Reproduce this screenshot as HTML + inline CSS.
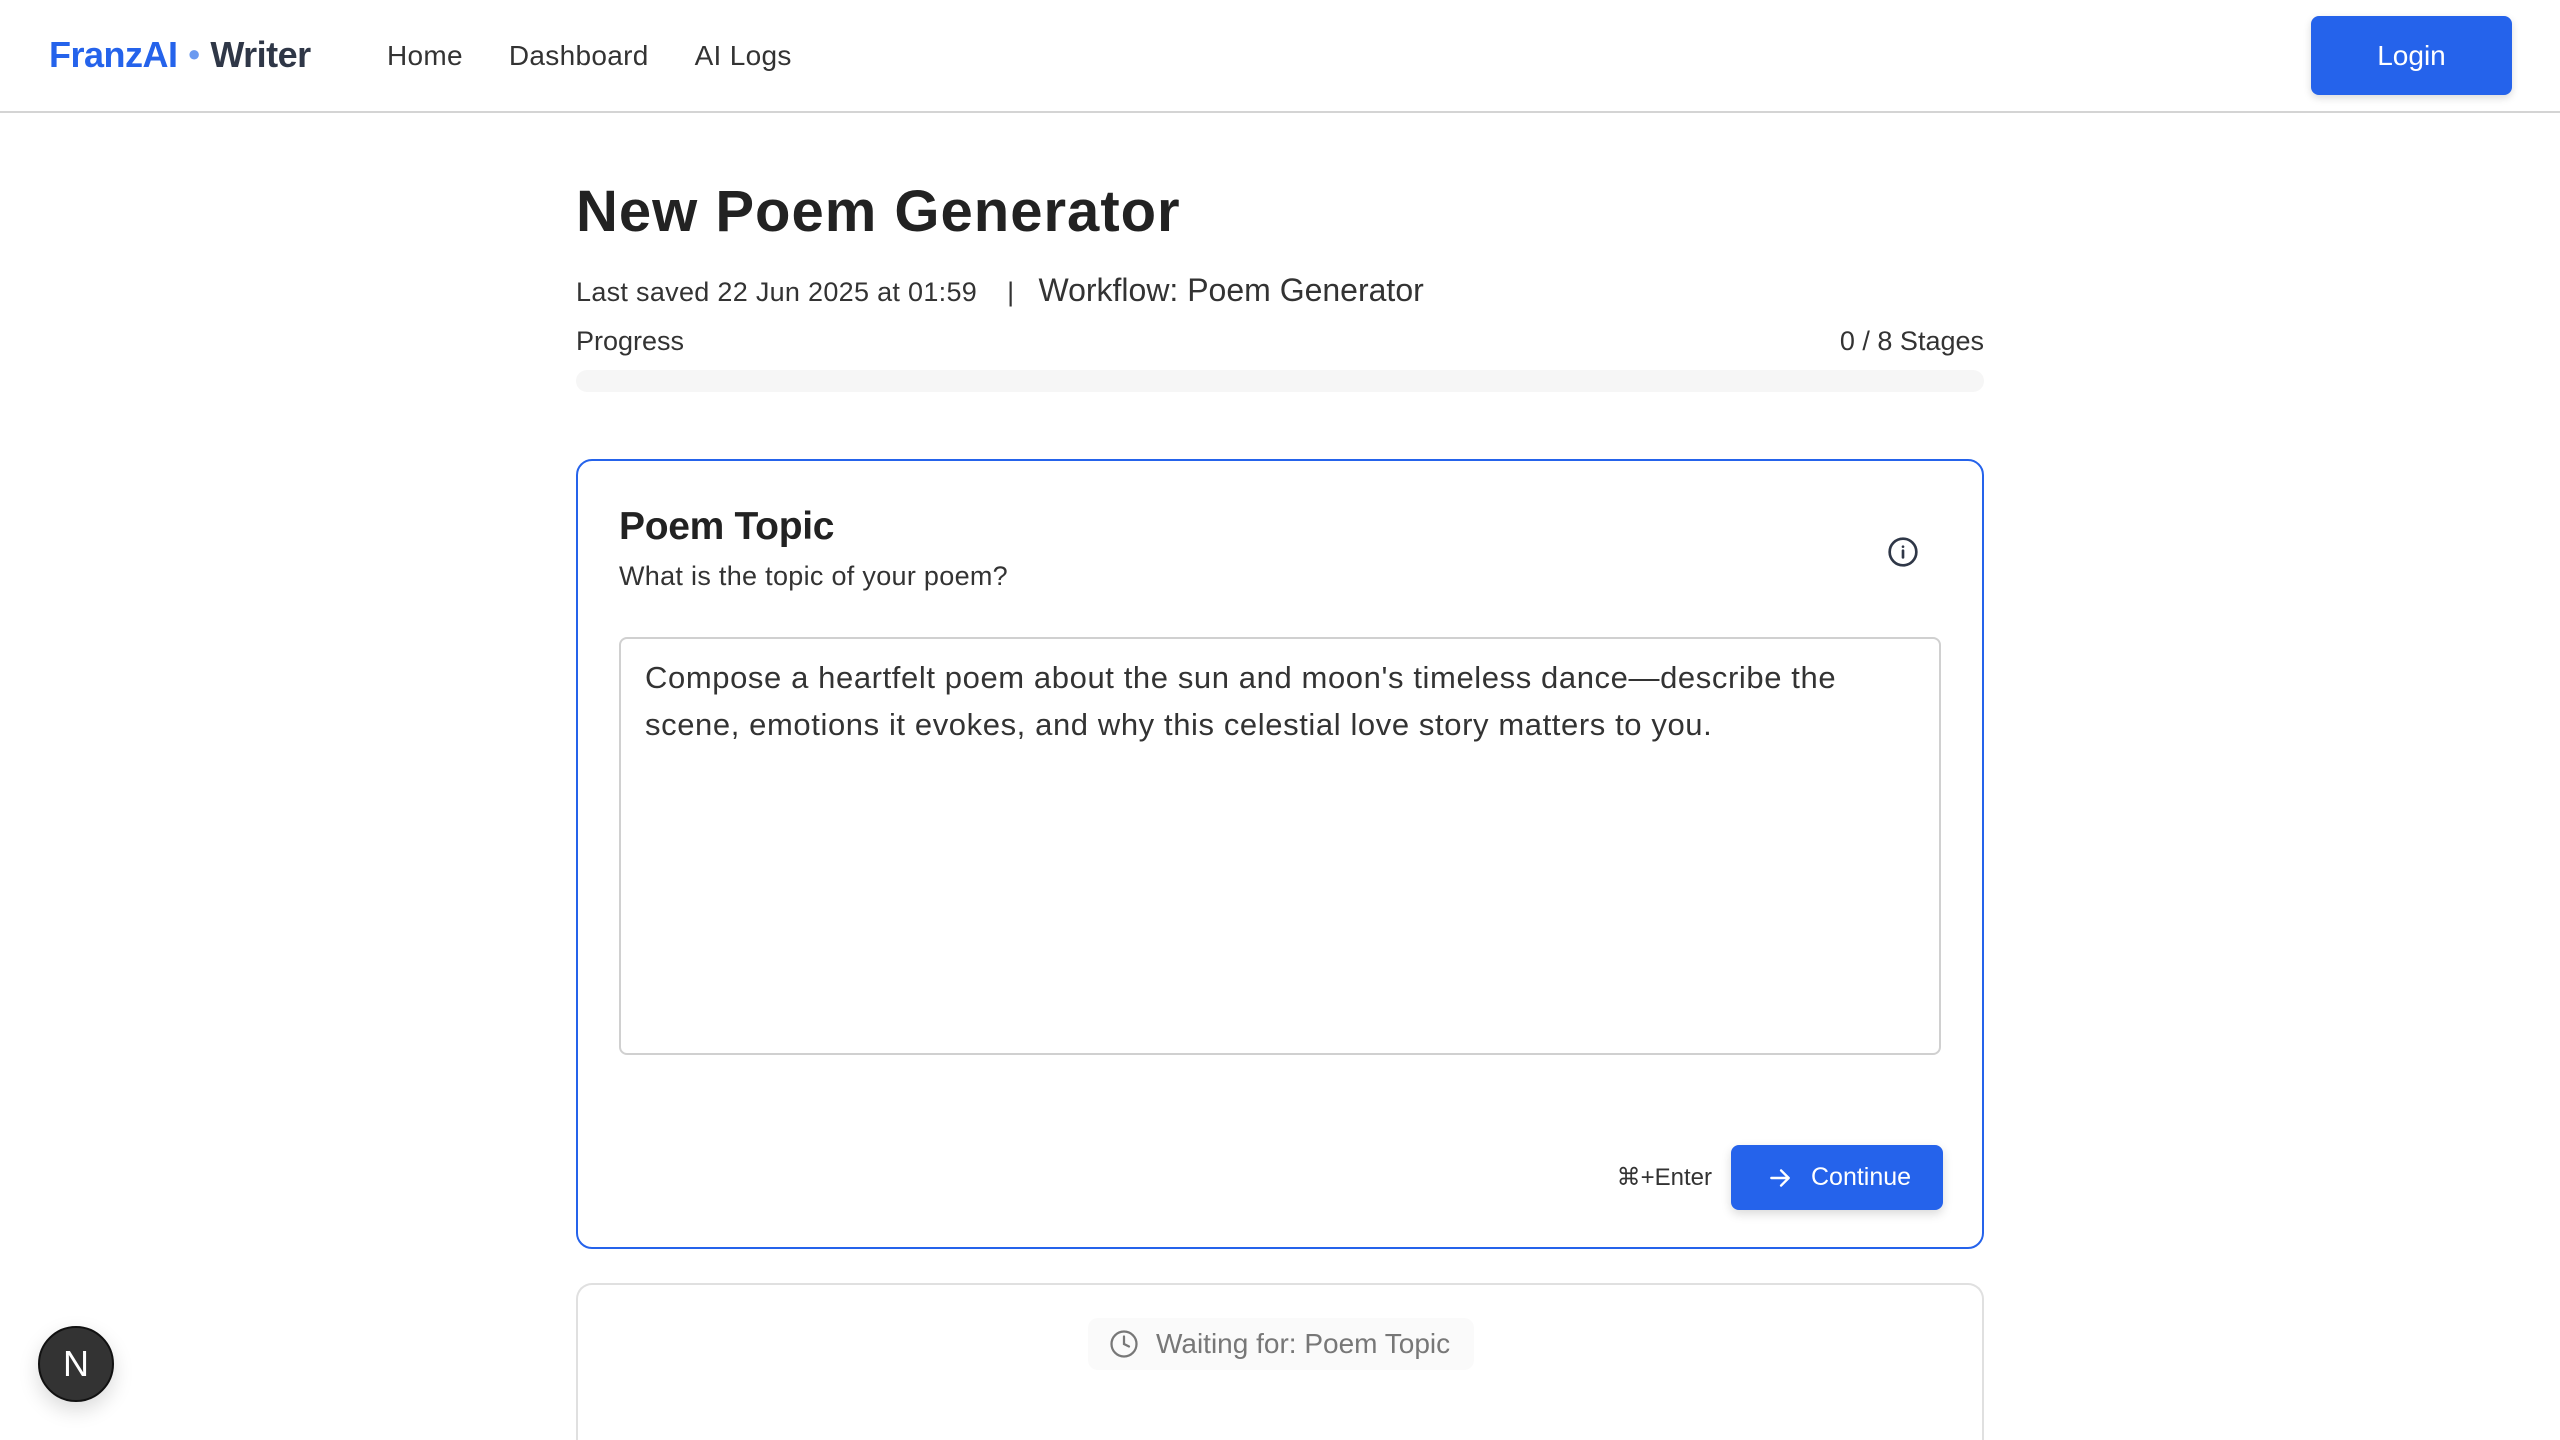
<!DOCTYPE html>
<html><head><meta charset="utf-8"><style>
*{box-sizing:border-box;margin:0;padding:0}
html,body{width:2560px;height:1440px;overflow:hidden;background:#fff;font-family:"Liberation Sans",sans-serif;color:#222}
.page{position:relative;width:2560px;height:1440px;overflow:hidden}
.nav{position:absolute;left:0;top:0;width:2560px;height:113px;border-bottom:2px solid #d4d4d4}
.logo{position:absolute;left:49px;top:34px;font-size:36px;font-weight:bold;letter-spacing:-0.5px}
.logo .b{color:#2563eb}.logo .d{color:#6b9af0;font-size:22px;position:relative;top:-6px;margin:0 10px}.logo .w{color:#2f3747}
.links{position:absolute;left:387px;top:40px;font-size:28px;color:#333;letter-spacing:0.3px}
.links span{margin-right:46px}
.login{position:absolute;left:2311px;top:16px;width:201px;height:79px;background:#2563eb;border-radius:8px;color:#fff;font-size:28px;text-align:center;line-height:79px;box-shadow:0 3px 8px rgba(0,0,0,.15)}
h1{position:absolute;left:576px;top:178px;font-size:58px;font-weight:bold;color:#222;letter-spacing:1px}
.meta{position:absolute;left:576px;top:272px;font-size:27px;color:#333;white-space:nowrap;letter-spacing:0.3px}
.meta .sep{margin:0 24px 0 30px}
.meta .wf{font-size:32px;letter-spacing:0}
.prog{position:absolute;left:576px;top:326px;font-size:27px;color:#333}
.stages{position:absolute;right:576px;top:326px;font-size:27px;color:#333}
.bar{position:absolute;left:576px;top:370px;width:1408px;height:22px;border-radius:11px;background:#f6f6f6}
.card{position:absolute;left:576px;top:459px;width:1408px;height:790px;border:2px solid #2563eb;border-radius:16px;background:#fff}
.card h2{position:absolute;left:41px;top:44px;font-size:39px;font-weight:bold;color:#222;letter-spacing:-0.3px}
.card .sub{position:absolute;left:41px;top:100px;font-size:27px;color:#333;letter-spacing:0.3px}
.info{position:absolute;left:1309px;top:75px}
.ta{position:absolute;left:41px;top:176px;width:1322px;height:418px;border:2px solid #d0d0d0;border-radius:8px;padding:15px 24px;font-size:31px;line-height:47px;color:#333;letter-spacing:0.6px}
.kbd{position:absolute;right:270px;top:702px;font-size:24px;color:#333}
.cont{position:absolute;left:1153px;top:684px;width:212px;height:65px;background:#2563eb;border-radius:8px;color:#fff;font-size:25px;line-height:65px;box-shadow:0 4px 10px rgba(0,0,0,.15)}
.cont svg{position:absolute;left:36px;top:20px}
.cont span{position:absolute;left:80px}
.card2{position:absolute;left:576px;top:1283px;width:1408px;height:157px;border:2px solid #e0e0e0;border-bottom:0;border-radius:16px 16px 0 0;background:#fff;overflow:hidden}
.pill{position:absolute;left:510px;top:33px;width:386px;height:52px;background:#fafafa;border-radius:10px;color:#777;font-size:28px;line-height:52px}
.pill svg{position:absolute;left:21px;top:11px}
.pill span{position:absolute;left:68px}
.c2t{position:absolute;left:41px;top:151px;font-size:39px;font-weight:bold;color:#666;line-height:45px}
.nb{position:absolute;left:38px;top:1326px;width:76px;height:76px;border-radius:50%;background:#333;border:2px solid #111;box-shadow:0 8px 20px rgba(0,0,0,.15);color:#fff;font-size:36px;text-align:center;line-height:72px}
</style></head><body><div class="page">
<div class="nav">
<div class="logo"><span class="b">FranzAI</span><span class="d">●</span><span class="w">Writer</span></div>
<div class="links"><span>Home</span><span>Dashboard</span><span>AI Logs</span></div>
<div class="login">Login</div>
</div>
<h1>New Poem Generator</h1>
<div class="meta">Last saved 22 Jun 2025 at 01:59<span class="sep">|</span><span class="wf">Workflow: Poem Generator</span></div>
<div class="prog">Progress</div>
<div class="stages">0 / 8 Stages</div>
<div class="bar"></div>
<div class="card">
<h2>Poem Topic</h2>
<div class="sub">What is the topic of your poem?</div>
<svg class="info" width="32" height="32" viewBox="0 0 24 24" fill="none" stroke="#2f3747" stroke-width="2" stroke-linecap="round"><circle cx="12" cy="12" r="10"/><path d="M12 16v-5M12 8h.01"/></svg>
<div class="ta">Compose a heartfelt poem about the sun and moon's timeless dance—describe the scene, emotions it evokes, and why this celestial love story matters to you.</div>
<div class="kbd">⌘+Enter</div>
<div class="cont"><svg width="26" height="26" viewBox="0 0 24 24" fill="none" stroke="#fff" stroke-width="2.2" stroke-linecap="round" stroke-linejoin="round"><path d="M4 12h16M13 5l7 7-7 7"/></svg><span>Continue</span></div>
</div>
<div class="card2">
<div class="pill"><svg width="30" height="30" viewBox="0 0 24 24" fill="none" stroke="#777" stroke-width="1.8" stroke-linecap="round"><circle cx="12" cy="12" r="10"/><path d="M12 6v6l4 2"/></svg><span>Waiting for: Poem Topic</span></div>
<div class="c2t">Generate Poem &amp; Title</div>
</div>
<div class="nb">N</div>
</div></body></html>
